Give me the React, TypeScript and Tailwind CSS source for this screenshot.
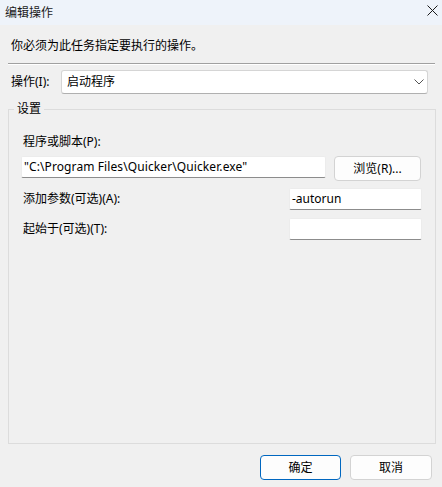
import React from "react";

const cn = "font-['Segoe_UI','Noto_Sans','Noto_Sans_CJK_SC',sans-serif]";

function TextBox({ value, className }: { value?: string; className: string }) {
  return (
    <div
      className={`h-[22px] bg-white border border-[#ececec] border-b-[#8c8c8c] rounded-[2px] flex items-center pl-[2px] text-[12px] text-black whitespace-nowrap overflow-hidden ${className}`}
    >
      {value}
    </div>
  );
}

function Btn({ label, primary, className }: { label: string; primary?: boolean; className: string }) {
  return (
    <div
      className={`h-[25px] rounded-[4px] border bg-[#fdfdfd] flex items-center justify-center text-[12px] text-black ${
        primary ? "border-[#0067c0]" : "border-[#d3d3d3]"
      } ${className}`}
    >
      {label}
    </div>
  );
}

export default function App() {
  return (
    <div className={`w-[442px] h-[487px] bg-[#f0f0f0] flex flex-col ${cn} text-[12px] leading-[16px] text-black`}>
      {/* title bar */}
      <div className="h-[25px] bg-[#eef3fa] flex items-center justify-between pl-[5px] pr-[4px]">
        <span className="text-[12px] text-[#1a1a1a]">编辑操作</span>
        <svg width="11" height="11" viewBox="0 0 11 11" className="mb-[5px]">
          <path d="M0.5 0.5 L10.5 10.5 M10.5 0.5 L0.5 10.5" stroke="#1a1a1a" strokeWidth="1" />
        </svg>
      </div>

      <div className="pl-[11px] mt-[13px]">你必须为此任务指定要执行的操作。</div>

      <div className="ml-[8px] mr-[7px] mt-[9px] border-t border-[#a0a0a0] border-b border-b-white h-[2px]" />

      <div className="flex items-center mt-[5px]">
        <span className="pl-[11px] w-[61px]">操作(I):</span>
        <div className="w-[367px] h-[24px] bg-white border border-[#d5d5d5] border-b-[#b0b0b0] rounded-[3px] flex items-center justify-between pl-[5px] pr-[3px]">
          <span>启动程序</span>
          <svg width="10" height="6" viewBox="0 0 10 6">
            <path d="M0.5 0.5 L5 5 L9.5 0.5" stroke="#555" fill="none" strokeWidth="1" />
          </svg>
        </div>
      </div>

      <fieldset className="ml-[8px] w-[428px] h-[343px] mt-[7px] border border-[#dcdcdc] pb-0">
        <legend className="ml-[5px] px-[3px] leading-[16px]">设置</legend>
        <div className="pl-[14px] mt-[17px]">程序或脚本(P):</div>
        <div className="flex items-start mt-[6px] pl-[12px]">
          <TextBox value={'"C:\\Program Files\\Quicker\\Quicker.exe"'} className="w-[305px] tracking-[0.1px]" />
          <Btn label="浏览(R)..." className="w-[87px] ml-[8px]" />
        </div>
        <div className="flex items-center mt-[7px] pl-[14px]">
          <span className="w-[266px]">添加参数(可选)(A):</span>
          <TextBox value="-autorun" className="w-[133px]" />
        </div>
        <div className="flex items-center mt-[8px] pl-[14px]">
          <span className="w-[266px]">起始于(可选)(T):</span>
          <TextBox className="w-[133px]" />
        </div>
      </fieldset>

      <div className="flex justify-end gap-[9px] pr-[10px] mt-[11px]">
        <Btn label="确定" primary className="w-[81px]" />
        <Btn label="取消" className="w-[82px]" />
      </div>
    </div>
  );
}
